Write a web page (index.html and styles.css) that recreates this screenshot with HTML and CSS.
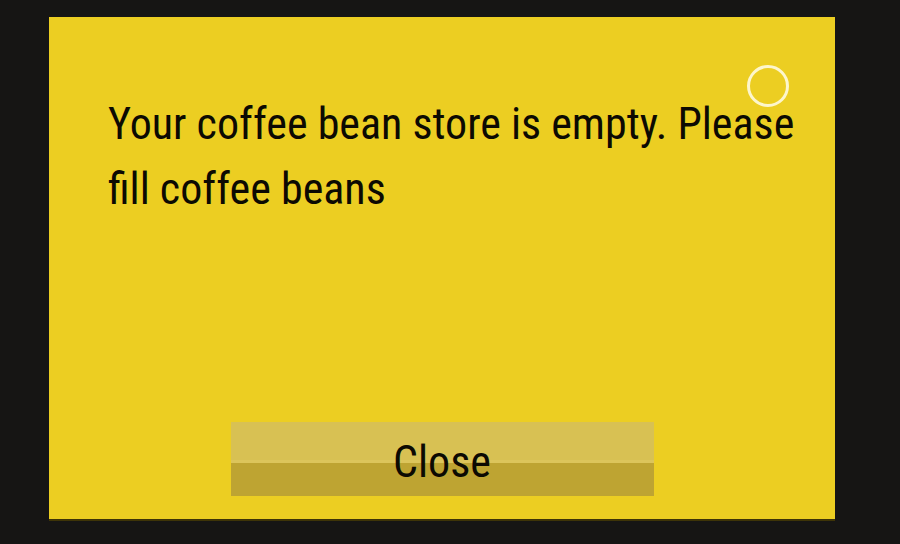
FILE: index.html
```html
<!DOCTYPE html>
<html><head><link rel="stylesheet" href="styles.css"></head>
<body>
<div class="panel">
  <div class="ring"></div>
  <p class="message">Your coffee bean store is empty. Please fill coffee beans</p>
  <button class="close">Close</button>
</div>
</body></html>
```
FILE: styles.css
```css
html,body{margin:0;padding:0}
body{background:#161514;width:900px;height:544px;overflow:hidden;padding-top:17px;box-sizing:border-box}
.panel{position:relative;margin-left:49px;width:786px;height:504px;box-sizing:border-box;background:#ecce22;border-bottom:2px solid #3e3407;display:flex;flex-direction:column;align-items:center}
.ring{position:absolute;left:698px;top:48px;width:42px;height:42px;box-sizing:border-box;border:3px solid #fdf6cc;border-radius:50%}
.message{align-self:stretch;margin:0;padding:75px 30px 0 59px;font-family:"Roboto",sans-serif;font-stretch:condensed;font-weight:400;font-size:44px;line-height:65px;color:#0c0a02}
.close{margin-top:auto;margin-bottom:23px;width:423px;height:74px;box-sizing:border-box;border:0;padding:6px 0 0;font-family:"Roboto",sans-serif;font-stretch:condensed;font-size:44px;line-height:68px;color:#0c0a02;background:linear-gradient(to bottom,#d8c153 0,#d8c153 38px,#dcc55b 38px,#dcc55b 41px,#bea432 41px,#bea432 100%)}
```
